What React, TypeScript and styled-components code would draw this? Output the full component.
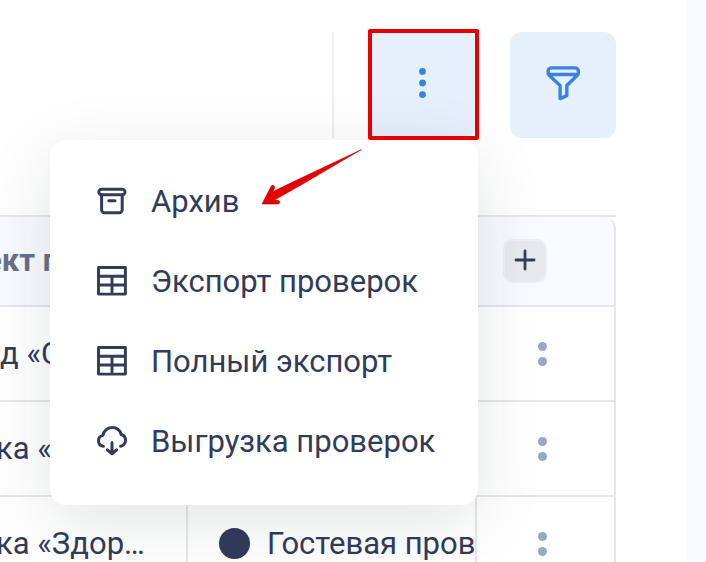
import React from "react";
import styled, { createGlobalStyle, css } from "styled-components";

const ink = "#323b5a";
const blue = "#3a82e2";
const line = "#e6e7e8";

const GlobalStyle = createGlobalStyle`
  *, *::before, *::after { box-sizing: border-box; }
  body {
    margin: 0;
    background: #f8f9fd;
    color: ${ink};
    font-family: Roboto, "Liberation Sans", sans-serif;
    font-size: 31px;
    line-height: 40px;
  }
  button { font: inherit; color: inherit; border: 0; padding: 0; cursor: pointer; }
`;

const Panel = styled.main`
  height: 100vh;
  margin-right: 20px;
  padding: 32px 70px 0 0;
  background: #fff;
  overflow: hidden;
`;

const Toolbar = styled.header`
  display: flex;
  justify-content: flex-end;
  height: 106px;
  margin-bottom: 77px;
`;

const Divider = styled.div`
  width: 2px;
  margin-right: 35px;
  background: #eeeff5;
`;

const MenuAnchor = styled.div`
  position: relative;
  z-index: 2;
  margin-right: 34px;
`;

const ToolButton = styled.button<{ $joined?: boolean }>`
  display: flex;
  align-items: center;
  justify-content: center;
  width: ${(p) => (p.$joined ? 107 : 106)}px;
  height: 106px;
  padding-bottom: 4px;
  border-radius: ${(p) => (p.$joined ? "0 12px 12px 0" : "12px")};
  background: #e5f0fa;
  color: ${blue};
`;

const Highlight = styled.div`
  position: absolute;
  inset: -3px -3px -2px -1px;
  border: 4px solid #e60000;
  border-radius: 2px;
  pointer-events: none;
`;

const Menu = styled.ul`
  position: absolute;
  top: 108px;
  right: -2px;
  width: 428px;
  margin: 0;
  padding: 22px 0 23px;
  list-style: none;
  border-radius: 16px;
  background: #fff;
  box-shadow: 0 16px 68px rgba(20, 36, 32, 0.12);
`;

const MenuItem = styled.button`
  display: flex;
  align-items: center;
  gap: 23px;
  width: 100%;
  height: 80px;
  padding: 0 46px;
  background: none;
  text-align: left;
  white-space: nowrap;

  svg { flex: none; }
`;

const Arrow = styled.svg`
  position: absolute;
  top: 114px;
  right: 112px;
  pointer-events: none;
`;

const TableFrame = styled.div`
  margin-left: -20px;
  border-top: 2px solid ${line};
`;

const Table = styled.table`
  width: 100%;
  table-layout: fixed;
  border-spacing: 0;
`;

const ObjectColumn = styled.col`
  width: 208px;
`;

const ActionsColumn = styled.col`
  width: 139px;
`;

const cell = css`
  padding: 0;
  border-right: 2px solid ${line};
  border-bottom: 2px solid ${line};
  text-align: left;
  white-space: nowrap;
  overflow: hidden;
`;

const HeadCell = styled.th<{ $indent?: number }>`
  ${cell}
  height: 90px;
  padding-left: ${(p) => p.$indent ?? 0}px;
  background: #f9faff;
  color: #66708a;
  font-weight: 700;

  &:last-child { border-top-right-radius: 12px; }
`;

const Cell = styled.td<{ $indent?: number }>`
  ${cell}
  height: 95px;
  padding-left: ${(p) => p.$indent ?? 0}px;
`;

const Status = styled.div`
  display: flex;
  align-items: center;
  gap: 17px;
`;

const StatusDot = styled.span`
  flex: none;
  width: 31px;
  height: 31px;
  border-radius: 50%;
  background: ${ink};
`;

const AddButton = styled.button`
  display: flex;
  align-items: center;
  justify-content: center;
  width: 44px;
  height: 44px;
  padding-bottom: 2px;
  border: 2px solid #eeeff3;
  border-radius: 10px;
  background: #e8e9ed;
  color: ${ink};
`;

const RowMenuButton = styled.button`
  display: flex;
  flex-direction: column;
  align-items: center;
  justify-content: center;
  gap: 6px;
  width: 44px;
  height: 44px;
  background: none;
`;

const RowDot = styled.span`
  width: 9px;
  height: 9px;
  border-radius: 50%;
  background: #9ba8c2;
`;

const stroke = {
  fill: "none",
  stroke: "currentColor",
  strokeWidth: 3,
  strokeLinecap: "round" as const,
  strokeLinejoin: "round" as const,
  "aria-hidden": true,
};

const ArchiveIcon = () => (
  <svg width="32" height="32" viewBox="0 0 32 32" {...stroke} strokeWidth={3}>
    <rect x="2.8" y="3.2" width="26.2" height="5.6" rx="2.8" />
    <path d="M5.6 9v14.800a3 3 0 0 0 3 3h14.600a3 3 0 0 0 3-3V9M12.800 14.800h6.200" />
  </svg>
);

const TableIcon = () => (
  <svg width="32" height="32" viewBox="0 0 32 32" {...stroke} strokeWidth={2.9}>
    <path d="M2.500 1.500h26.900v26.600H2.500zM2.500 10.200h26.900M2.500 19h26.900M16 10.200v17.900" />
  </svg>
);

const CloudIcon = () => (
  <svg width="32" height="32" viewBox="0 1 32 32" {...stroke}>
    <path d="M7.4 21.2C4.5 20.8 2.5 18.6 2.5 15.7c0-2.600 1.800-4.700 4.300-5.300C7.600 5.900 11.400 2.500 16 2.500c4.400 0 8 2.800 9.200 7 2.500.7 4.300 3 4.300 5.700 0 3-2 5.500-4.900 6M16 17.500v11M11.400 24.800l4.600 4 4.600-4" />
  </svg>
);

const FunnelIcon = () => (
  <svg width="36" height="36" viewBox="0 0 36 36" {...stroke} strokeWidth={3.4}>
    <path d="M6 2.900h24a3.400 3.400 0 0 1 3.400 3.400v1.100a4.500 4.500 0 0 1-1.300 3.100L21.800 20.500v10.100l-6.700 3V20.500L4.400 10.500a4.500 4.500 0 0 1-1.300-3.100V6.300A3.100 3.100 0 0 1 6 2.900zM3.500 9.500h29.500" />
  </svg>
);

const DotsIcon = () => (
  <svg width="8" height="32" viewBox="0 0 8 32" fill="currentColor" aria-hidden>
    <circle cx="3.500" cy="4.400" r="3.400" />
    <circle cx="3.500" cy="16" r="3.400" />
    <circle cx="3.500" cy="27.600" r="3.400" />
  </svg>
);

const PlusIcon = () => (
  <svg width="22" height="22" viewBox="0 0 22 22" {...stroke} strokeWidth={2.8}>
    <path d="M11 2v18M2 11h18" />
  </svg>
);

const menuItems = [
  { label: "Архив", Icon: ArchiveIcon },
  { label: "Экспорт проверок", Icon: TableIcon },
  { label: "Полный экспорт", Icon: TableIcon },
  { label: "Выгрузка проверок", Icon: CloudIcon },
];

const rows = [
  { object: "д «С", indent: 20, status: "" },
  { object: "ка «", indent: 16, status: "" },
  { object: "ка «Здор…", indent: 16, status: "Гостевая пров" },
];

export default function App() {
  return (
    <>
      <GlobalStyle />
      <Panel>
        <Toolbar>
          <Divider />
          <MenuAnchor>
            <ToolButton $joined type="button" aria-label="Ещё" aria-expanded="true">
              <DotsIcon />
            </ToolButton>
            <Menu>
              {menuItems.map(({ label, Icon }) => (
                <li key={label}>
                  <MenuItem type="button">
                    <Icon />
                    {label}
                  </MenuItem>
                </li>
              ))}
            </Menu>
            <Highlight />
            <Arrow width="104" height="60" viewBox="0 0 104 60" aria-hidden>
              <path
                d="M101.500 3.500 39 33 13 45.500l1.500-3.500c.8-2.800-2.500-3.600-3.500-1.500L2 58h16c2.500-.2 2.500-3.500-.5-3.700l-3-.3L41 39z"
                fill="#e60000"
                stroke="#b80606"
                strokeWidth="0.600"
              />
            </Arrow>
          </MenuAnchor>
          <ToolButton type="button" aria-label="Фильтр">
            <FunnelIcon />
          </ToolButton>
        </Toolbar>
        <TableFrame>
          <Table>
            <colgroup>
              <ObjectColumn />
              <col />
              <ActionsColumn />
            </colgroup>
            <thead>
              <tr>
                <HeadCell $indent={5}>ект п</HeadCell>
                <HeadCell />
                <HeadCell $indent={26}>
                  <AddButton type="button" aria-label="Добавить столбец">
                    <PlusIcon />
                  </AddButton>
                </HeadCell>
              </tr>
            </thead>
            <tbody>
              {rows.map((row, i) => (
                <tr key={i}>
                  <Cell $indent={row.indent}>{row.object}</Cell>
                  <Cell $indent={31}>
                    {row.status && (
                      <Status>
                        <StatusDot />
                        {row.status}
                      </Status>
                    )}
                  </Cell>
                  <Cell $indent={43}>
                    <RowMenuButton type="button" aria-label="Действия">
                      <RowDot />
                      <RowDot />
                    </RowMenuButton>
                  </Cell>
                </tr>
              ))}
            </tbody>
          </Table>
        </TableFrame>
      </Panel>
    </>
  );
}
